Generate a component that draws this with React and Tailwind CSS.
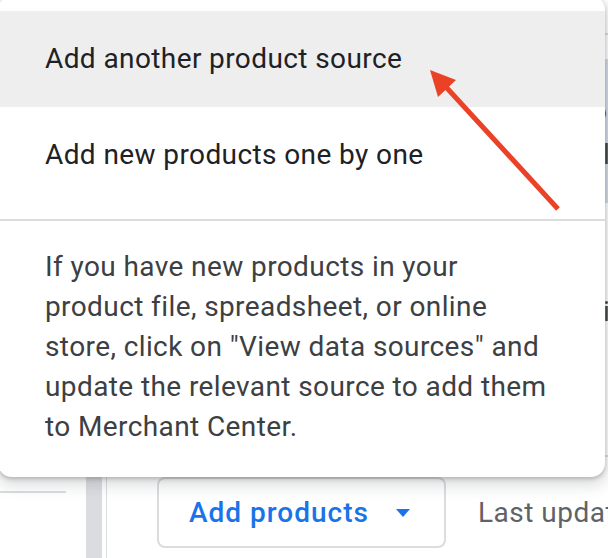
import React from "react";

export default function App() {
  return (
    <div className="relative w-[608px] h-[558px] overflow-hidden bg-white [font-family:Roboto,sans-serif]">
      {/* Background page */}
      <div className="flex h-full">
        {/* left sidebar */}
        <div className="w-[86px] shrink-0 flex flex-col">
          <div className="h-[491px]" />
          <div className="w-[66px] h-[2px] bg-[#dadce0]" />
        </div>
        {/* scrollbar */}
        <div className="w-[16px] shrink-0 bg-[#dadce0]" />
        <div className="w-[4px] shrink-0" />
        <div className="w-[1px] shrink-0 bg-[#dadce0]" />
        {/* main */}
        <div className="flex-1 flex flex-col min-w-0 text-[28px] leading-[40px] text-[#3c4043]">
          <div className="h-[35px] shrink-0 border-b-2 border-[#dadce0]" />
          <div className="h-[24px] shrink-0" />
          <div className="h-[144px] shrink-0 bg-[#d3dcea] pt-[33px]">
            <div className="pl-[484px] whitespace-nowrap">o</div>
            <div className="mt-[3px] pl-[496px] whitespace-nowrap">l</div>
          </div>
          <div className="h-[89px] shrink-0" />
          <div className="pl-[496px] whitespace-nowrap">i</div>
          <div className="h-[123px] shrink-0" />
          <div className="h-[2px] shrink-0 bg-[#dadce0]" />
          <div className="h-[20px] shrink-0" />
          <div className="flex items-center pl-[50px] whitespace-nowrap">
            <button className="h-[71px] w-[289px] shrink-0 flex items-center pl-[30px] rounded-[8px] border-2 border-[#dadce0] bg-white">
              <span className="text-[28px] font-medium tracking-[1px] text-[#1a73e8]">Add products</span>
              <svg className="ml-[27px]" width="14" height="8" viewBox="0 0 14 8">
                <path d="M0 0 L14 0 L7 8 Z" fill="#1a73e8" />
              </svg>
            </button>
            <span className="ml-[32px] tracking-[0.5px] text-[#5f6368]">Last updated</span>
          </div>
        </div>
      </div>

      {/* Dropdown menu */}
      <div className="absolute left-[-2px] top-[-4px] w-[607px] h-[481px] bg-white rounded-[14px] shadow-[0_6px_14px_4px_rgba(60,64,67,0.15),0_2px_4px_rgba(60,64,67,0.3)] flex flex-col">
        <div className="pt-[15px] pb-[16px]">
          <div className="h-[96px] flex items-center pl-[47px] bg-[#eeeeee] text-[28px] leading-[40px] tracking-[0.4px] text-[#202124]">
            Add another product source
          </div>
          <div className="h-[96px] flex items-center pl-[47px] text-[28px] leading-[40px] tracking-[0.4px] text-[#202124]">
            Add new products one by one
          </div>
        </div>
        <div className="h-[2px] bg-[#dadce0]" />
        <p className="pt-[26px] pl-[47px] text-[28px] leading-[40px] tracking-[0.4px] text-[#3c4043] whitespace-nowrap">
          If you have new products in your
          <br />
          product file, spreadsheet, or online
          <br />
          store, click on "View data sources" and
          <br />
          update the relevant source to add them
          <br />
          to Merchant Center.
        </p>
      </div>

      {/* Annotation arrow */}
      <svg className="absolute inset-0 pointer-events-none" width="608" height="558" viewBox="0 0 608 558">
        <line x1="558" y1="209" x2="446" y2="87" stroke="#ea4127" strokeWidth="5" strokeLinecap="butt" />
        <polygon points="430,70 456,80 438,97" fill="#ea4127" />
      </svg>
    </div>
  );
}
